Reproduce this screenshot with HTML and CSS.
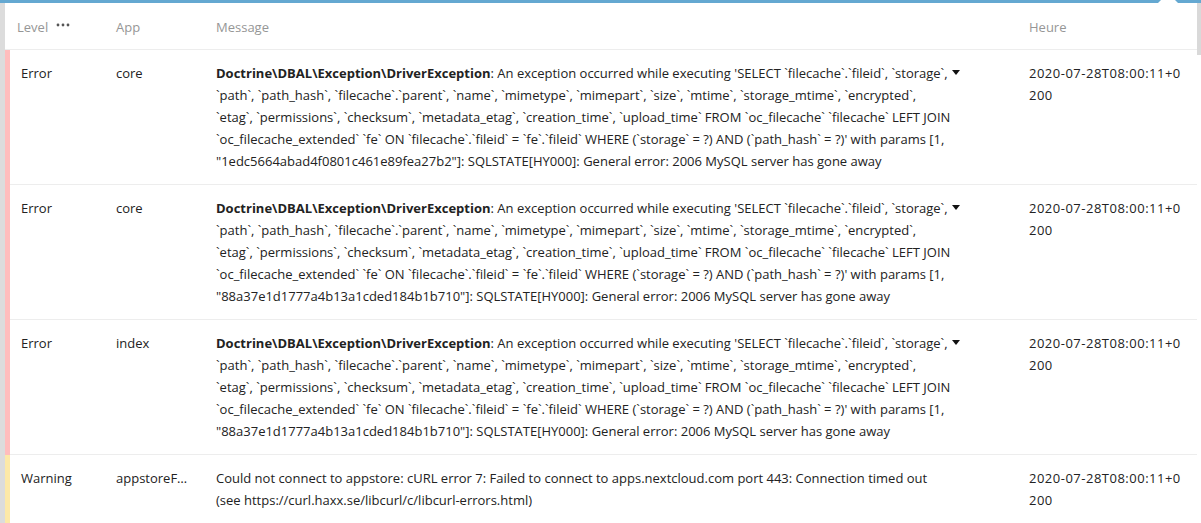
FILE: index.html
```html
<!DOCTYPE html>
<html lang="fr">
<head>
<meta charset="utf-8">
<title>Journaux</title>
<link rel="stylesheet" href="styles.css">
</head>
<body>
<div class="topbar"><span class="notch"></span></div>
<div class="frame">
  <div class="nav-edge"></div>
  <div class="log">
    <div class="row head">
      <div class="stripe"></div>
      <div class="cell level">Level <svg class="dots" width="14" height="4" viewBox="0 0 14 4"><circle cx="2" cy="2" r="1.4"/><circle cx="7" cy="2" r="1.4"/><circle cx="12" cy="2" r="1.4"/></svg></div>
      <div class="cell app">App</div>
      <div class="cell msg">Message</div>
      <div class="cell time">Heure</div>
    </div>

    <div class="row error">
      <div class="stripe"></div>
      <div class="cell level">Error</div>
      <div class="cell app">core</div>
      <div class="cell msg"><span class="toggle"></span><b>Doctrine\DBAL\Exception\DriverException</b>: An exception occurred while executing 'SELECT `filecache`.`fileid`, `storage`, `path`, `path_hash`, `filecache`.`parent`, `name`, `mimetype`, `mimepart`, `size`, `mtime`, `storage_mtime`, `encrypted`, `etag`, `permissions`, `checksum`, `metadata_etag`, `creation_time`, `upload_time` FROM `oc_filecache` `filecache` LEFT JOIN `oc_filecache_extended` `fe` ON `filecache`.`fileid` = `fe`.`fileid` WHERE (`storage` = ?) AND (`path_hash` = ?)' with params [1, "1edc5664abad4f0801c461e89fea27b2"]: SQLSTATE[HY000]: General error: 2006 MySQL server has gone away</div>
      <div class="cell time">2020-07-28T08:00:11+0200</div>
    </div>

    <div class="row error">
      <div class="stripe"></div>
      <div class="cell level">Error</div>
      <div class="cell app">core</div>
      <div class="cell msg"><span class="toggle"></span><b>Doctrine\DBAL\Exception\DriverException</b>: An exception occurred while executing 'SELECT `filecache`.`fileid`, `storage`, `path`, `path_hash`, `filecache`.`parent`, `name`, `mimetype`, `mimepart`, `size`, `mtime`, `storage_mtime`, `encrypted`, `etag`, `permissions`, `checksum`, `metadata_etag`, `creation_time`, `upload_time` FROM `oc_filecache` `filecache` LEFT JOIN `oc_filecache_extended` `fe` ON `filecache`.`fileid` = `fe`.`fileid` WHERE (`storage` = ?) AND (`path_hash` = ?)' with params [1, "88a37e1d1777a4b13a1cded184b1b710"]: SQLSTATE[HY000]: General error: 2006 MySQL server has gone away</div>
      <div class="cell time">2020-07-28T08:00:11+0200</div>
    </div>

    <div class="row error">
      <div class="stripe"></div>
      <div class="cell level">Error</div>
      <div class="cell app">index</div>
      <div class="cell msg"><span class="toggle"></span><b>Doctrine\DBAL\Exception\DriverException</b>: An exception occurred while executing 'SELECT `filecache`.`fileid`, `storage`, `path`, `path_hash`, `filecache`.`parent`, `name`, `mimetype`, `mimepart`, `size`, `mtime`, `storage_mtime`, `encrypted`, `etag`, `permissions`, `checksum`, `metadata_etag`, `creation_time`, `upload_time` FROM `oc_filecache` `filecache` LEFT JOIN `oc_filecache_extended` `fe` ON `filecache`.`fileid` = `fe`.`fileid` WHERE (`storage` = ?) AND (`path_hash` = ?)' with params [1, "88a37e1d1777a4b13a1cded184b1b710"]: SQLSTATE[HY000]: General error: 2006 MySQL server has gone away</div>
      <div class="cell time">2020-07-28T08:00:11+0200</div>
    </div>

    <div class="row warning">
      <div class="stripe"></div>
      <div class="cell level">Warning</div>
      <div class="cell app"><span class="trunc">appstoreFetcher</span></div>
      <div class="cell msg">Could not connect to appstore: cURL error 7: Failed to connect to apps.nextcloud.com port 443: Connection timed out <span class="ref">(see https://curl.haxx.se/libcurl/c/libcurl-errors.html)</span></div>
      <div class="cell time">2020-07-28T08:00:11+0200</div>
    </div>
  </div>
  <div class="scrollbar"><div class="thumb"></div></div>
</div>
</body>
</html>
```

FILE: styles.css
```css
html, body {
  margin: 0;
  padding: 0;
  height: 100%;
  overflow: hidden;
  background: #fff;
}

body {
  font-family: "Open Sans", "Noto Sans", sans-serif;
  font-size: 13px;
  line-height: 22px;
  color: #222;
  position: relative;
}

.topbar {
  height: 3px;
  background: #64a8d1;
  position: relative;
}

.notch {
  position: absolute;
  left: 1158px;
  top: -7px;
  width: 0;
  height: 0;
  border-left: 10px solid transparent;
  border-right: 10px solid transparent;
  border-bottom: 10px solid #fff;
}

.frame {
  display: flex;
  height: 520px;
}

.nav-edge {
  width: 5px;
  flex: none;
  background: #dcdcdc;
}

.log {
  flex: 1;
  min-width: 0;
}

.scrollbar {
  width: 4px;
  flex: none;
  background: #fff;
}

.thumb {
  height: 52px;
  background: #d9d9d9;
}

.row {
  display: grid;
  grid-template-columns: 5px 106px 100px 1fr 168px;
}

.cell {
  border-bottom: 1px solid #ededed;
  padding-top: 12px;
  padding-bottom: 12px;
  min-width: 0;
}

.head .cell {
  padding-top: 13px;
  padding-bottom: 11px;
  color: #969696;
}

.head .stripe {
  border-bottom: 1px solid #ededed;
}

.error .stripe {
  background: #ffbdbd;
}

.warning .stripe {
  background: #fde9a8;
}

.level {
  padding-left: 11px;
}

.head .level {
  padding-left: 7px;
  display: flex;
  align-items: center;
  gap: 8px;
}

.dots {
  fill: #555;
  margin-top: -4px;
}

.app {
  padding-right: 24px;
}

.trunc {
  display: block;
  white-space: nowrap;
  overflow: hidden;
  text-overflow: ellipsis;
}

.msg {
  position: relative;
  padding-right: 76px;
}

.msg b {
  font-weight: 700;
}

.ref {
  white-space: nowrap;
}

.toggle {
  position: absolute;
  left: 736px;
  top: 20px;
  width: 0;
  height: 0;
  border-left: 4px solid transparent;
  border-right: 4px solid transparent;
  border-top: 5px solid #111;
}

.time {
  padding-right: 11px;
  word-break: break-all;
}

.row:not(.head) .time {
  letter-spacing: 0.5px;
}
```
